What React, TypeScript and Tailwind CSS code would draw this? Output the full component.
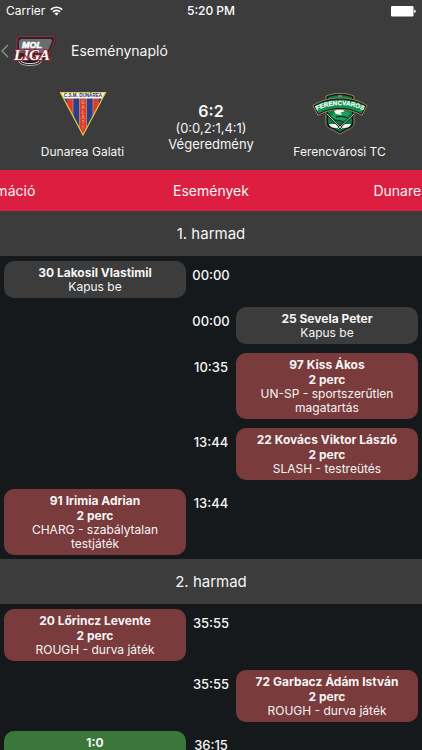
import clsx from 'clsx';

type MatchEvent = {
  time: string;
  side: 'home' | 'away';
  kind: 'keeper' | 'penalty' | 'goal';
  title: string;
  minutes?: string;
  detail?: string;
};

const periods: { name: string; events: MatchEvent[] }[] = [
  {
    name: '1. harmad',
    events: [
      { time: '00:00', side: 'home', kind: 'keeper', title: '30 Lakosil Vlastimil', detail: 'Kapus be' },
      { time: '00:00', side: 'away', kind: 'keeper', title: '25 Sevela Peter', detail: 'Kapus be' },
      { time: '10:35', side: 'away', kind: 'penalty', title: '97 Kiss Ákos', minutes: '2 perc', detail: 'UN-SP - sportszerűtlen magatartás' },
      { time: '13:44', side: 'away', kind: 'penalty', title: '22 Kovács Viktor László', minutes: '2 perc', detail: 'SLASH - testreütés' },
      { time: '13:44', side: 'home', kind: 'penalty', title: '91 Irimia Adrian', minutes: '2 perc', detail: 'CHARG - szabálytalan testjáték' },
    ],
  },
  {
    name: '2. harmad',
    events: [
      { time: '35:55', side: 'home', kind: 'penalty', title: '20 Lőrincz Levente', minutes: '2 perc', detail: 'ROUGH - durva játék' },
      { time: '35:55', side: 'away', kind: 'penalty', title: '72 Garbacz Ádám István', minutes: '2 perc', detail: 'ROUGH - durva játék' },
      { time: '36:15', side: 'home', kind: 'goal', title: '1:0' },
    ],
  },
];

const tabs = ['Információ', 'Események', 'Dunarea Galati'];

function WifiIcon() {
  return (
    <svg width="13" height="10" viewBox="0 0 13 10" fill="none" stroke="white" strokeWidth="1.7">
      <path d="M0.8 3.6a8.1 8.1 0 0 1 11.4 0" />
      <path d="M2.9 5.8a5.1 5.1 0 0 1 7.2 0" />
      <path d="M6.5 9.6 4.4 7.5a3 3 0 0 1 4.2 0z" fill="white" stroke="none" />
    </svg>
  );
}

function BatteryIcon() {
  return (
    <svg width="25" height="11" viewBox="0 0 25 11" fill="white">
      <rect width="22.5" height="10.5" rx="1.2" />
      <path d="M23.2 3.6c1.1.2 1.6.9 1.6 1.7s-.5 1.4-1.6 1.6z" />
    </svg>
  );
}

function LeagueLogo() {
  return (
    <svg width="44" height="32" viewBox="0 0 44 32" fontWeight="bold" fontStyle="italic">
      <path d="M5 1h35c3 0 4 2 3 5l-6 14-5 5H4L2 17z" fill="#26282b" />
      <path d="M3.500 14 4 5c0-2.500 1-3.500 3-3.500h31.500c3.500 0 4.200 1.500 3 4.500L36 19" fill="none" stroke="#9c2b38" strokeWidth="1.200" />
      <path d="M8 4h28.500c2.500 0 3 1 2.200 3L34 18H6V6z" fill="#6b6e71" />
      <ellipse cx="17" cy="26.500" rx="11" ry="4" fill="#1b1d1f" stroke="#aeb1b3" strokeWidth="1" />
      <path d="M7.500 26c4 3.500 15 3.500 19 0" fill="none" stroke="#e5e5e5" strokeWidth="1" />
      <text x="9" y="12.500" fontFamily="Liberation Sans" fontSize="9" fill="white" stroke="white" strokeWidth="0.500">MOL</text>
      <g fontFamily="Liberation Serif" fontSize="15">
        <text x="1" y="25" fill="white" stroke="#8f2433" strokeWidth="2" paintOrder="stroke">LIGA</text>
      </g>
      <path d="m9 16 5 7" stroke="#a62035" strokeWidth="1.200" />
    </svg>
  );
}

function DunareaLogo() {
  return (
    <svg width="48" height="46" viewBox="0 0 48 46" fontFamily="Liberation Sans" fontWeight="bold" textAnchor="middle">
      <defs>
        <clipPath id="pennant">
          <path d="M1.500 2.500h45L24 45z" />
        </clipPath>
      </defs>
      <g clipPath="url(#pennant)">
        <path d="M0 0h48v46H0z" fill="#26418f" />
        <path d="M8 8h6v30H8zM20.500 8h7v38h-7zM34 8h6v30h-6z" fill="#dc3a35" />
        <path d="M14 8v30M20.500 8v36M27.500 8v36M34 8v30" stroke="#d79c4a" strokeWidth="0.700" />
        <path d="M0 0h48v8.500H0z" fill="#f7f7f2" />
      </g>
      <path d="M1.500 2.500h45L24 45z" fill="none" stroke="#e2c83f" strokeWidth="1.200" />
      <text x="24" y="7.300" fontSize="4.600" fill="#26336d">C.S.M. DUNĂREA</text>
      <g fontSize="4.500" fill="#e9ad55">
        <text x="24" y="14">G</text>
        <text x="24" y="19">A</text>
        <text x="24" y="24">L</text>
        <text x="24" y="29">A</text>
        <text x="24" y="34">T</text>
        <text x="24" y="39">I</text>
      </g>
    </svg>
  );
}

function FerencvarosLogo() {
  return (
    <svg width="56" height="44" viewBox="0 0 56 44">
      <path d="M14 4C22 .5 34 .5 42 4v27c0 4-4 6-7 7l-7 4-7-4c-3-1-7-3-7-7z" fill="#11191a" stroke="#a48b5c" strokeWidth="0.900" />
      <path d="M16 5.500c7-3 17-3 24 0V30c0 3-3 5-6 6l-6 4-6-4c-3-1-6-3-6-6z" fill="#0b7a45" />
      <path d="M22 21c5-4 14-3 17 1l-4 2 4 3-7 1 3 4-9-3-8-4z" fill="#1c9d5b" />
      <path d="M24 25c4-1 8-1 12 1M22 28c5 0 9 1 12 4" fill="none" stroke="#12281d" strokeWidth="1.200" />
      <path d="M22 19.500c3-3 9-3 10.500 0l-4 1 1.500 2.500-6-1z" fill="#f3f5f1" />
      <path d="M17 32h8l3 5-4-1c-3 0-6-1-7-4zM39 32h-8l-3 5 4-1c3 0 6-1 7-4z" fill="#f3f5f1" />
      <path d="m15 22 15 15M42 22 26 37" stroke="#182019" strokeWidth="2.200" />
      <path d="m15 22 15 15M42 22 26 37" stroke="#d9ddd6" strokeWidth="0.900" />
      <path d="M.8 13.500C16 3.500 40 3.500 55.200 13.500L50 23.500C38 15.500 18 15.500 6 23.500z" fill="#151d1d" stroke="#a48b5c" strokeWidth="0.900" />
      <path d="M2.800 14C17 5.500 39 5.500 53.200 14L49.500 21.500C38 14 18 14 6.500 21.500z" fill="#11904f" />
      <path id="crest-arc" d="M3 19.500C17 11 39 11 53 19.500" fill="none" />
      <text fontFamily="Liberation Sans" fontWeight="bold" fontSize="6.300" fill="white" stroke="white" strokeWidth="0.200" textAnchor="middle">
        <textPath href="#crest-arc" startOffset="50%">FERENCVAROS</textPath>
      </text>
      <path d="M26 4h4" stroke="#9fb6a4" strokeWidth="1" />
    </svg>
  );
}

function EventCard({ event }: { event: MatchEvent }) {
  return (
    <div
      className={clsx(
        'rounded-[10px] px-4 py-1 text-center text-xs',
        event.side === 'away' && 'col-start-3',
        event.kind === 'keeper' && 'bg-[#3c3c3c]',
        event.kind === 'penalty' && 'bg-[#793b3c]',
        event.kind === 'goal' && 'min-h-[52px] bg-[#3b773b]'
      )}
    >
      <p className="font-bold leading-[15px] whitespace-nowrap">{event.title}</p>
      {event.minutes && <p className="font-bold leading-[15px]">{event.minutes}</p>}
      {event.detail && <p className="leading-[14px]">{event.detail}</p>}
    </div>
  );
}

export default function App() {
  return (
    <div className="flex h-screen flex-col overflow-hidden bg-[#15191c] font-[Inter,sans-serif] text-[#f5f5f5]">
      <header className="bg-[#3c3c3c]">
        <div className="grid h-[22px] grid-cols-3 items-center px-[6px] text-xs text-white">
          <div className="flex items-center gap-[5px]">
            <span>Carrier</span>
            <WifiIcon />
          </div>
          <span className="text-center font-medium">5:20 PM</span>
          <div className="flex justify-end">
            <BatteryIcon />
          </div>
        </div>

        <div className="flex h-[58px] items-center">
          <button type="button" aria-label="Vissza" className="flex items-center gap-1 pl-px">
            <svg width="8" height="14" viewBox="0 0 8 14" fill="none" stroke="#929292" strokeWidth="1.300">
              <path d="M7 1 1 7l6 6" />
            </svg>
            <LeagueLogo />
          </button>
          <h1 className="ml-[14px] text-sm">Eseménynapló</h1>
        </div>

        <div className="grid h-[90px] grid-cols-[165px_1fr_165px] pt-[10px] text-center text-xs">
          <div className="flex flex-col items-center">
            <DunareaLogo />
            <p className="mt-2">Dunarea Galati</p>
          </div>
          <div className="pt-3">
            <p className="text-base leading-[18px] font-semibold">6:2</p>
            <p className="text-[13px] leading-4">(0:0,2:1,4:1)</p>
            <p className="text-[13px] leading-4">Végeredmény</p>
          </div>
          <div className="flex flex-col items-center pt-[2px]">
            <FerencvarosLogo />
            <p className="mt-2">Ferencvárosi TC</p>
          </div>
        </div>
      </header>

      <nav className="flex h-[41px] shrink-0 justify-center overflow-hidden bg-[#dc1f40]">
        {tabs.map((tab) => (
          <button key={tab} type="button" className="w-1/2 shrink-0 text-sm">
            {tab}
          </button>
        ))}
      </nav>

      <main className="min-h-0 flex-1 overflow-y-auto [scrollbar-width:none]">
        {periods.map((period) => (
          <section key={period.name}>
            <h2 className="flex h-[45px] items-center justify-center bg-[#3c3c3c] pt-[2px] text-[15px]">
              {period.name}
            </h2>
            {period.events.map((event) => (
              <div
                key={event.title}
                className="grid grid-flow-dense grid-cols-[1fr_50px_1fr] px-1 pt-[5px] pb-1"
              >
                <EventCard event={event} />
                <time className="col-start-2 pt-[5px] text-center text-[13px] font-medium">
                  {event.time}
                </time>
              </div>
            ))}
          </section>
        ))}
      </main>
    </div>
  );
}
